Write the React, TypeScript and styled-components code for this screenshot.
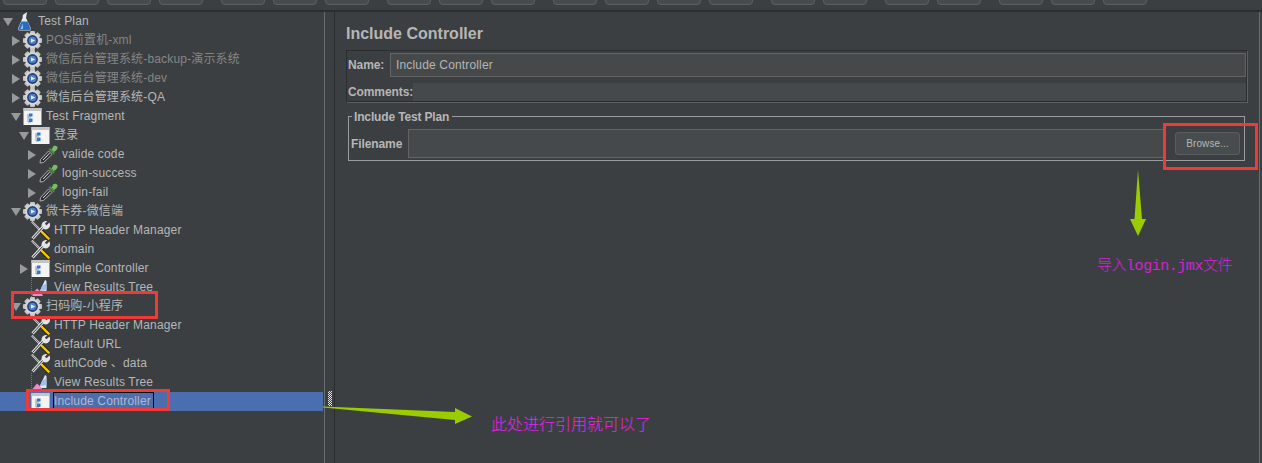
import React from "react";
import styled, {createGlobalStyle} from "styled-components";

const GlobalStyle = createGlobalStyle`
  html, body {
    margin: 0;
    background: #3c3f41;
  }
`;

const FONT = `"Liberation Sans", "Noto Sans CJK SC", sans-serif`;

const Page = styled.div`
  position: relative;
  width: 1262px;
  height: 463px;
  overflow: hidden;
  display: flex;
  flex-direction: column;
  background: #3c3f41;
  color: #b6b6b6;
  font: 12px ${FONT};
`;

const Toolbar = styled.div`
  flex: none;
  height: 10px;
  display: flex;
  align-items: flex-end;
  gap: 18px;
  padding: 0 0 5px 3px;
  box-sizing: border-box;
`;

const ToolGroup = styled.div`
  display: flex;
  gap: 8px;
`;

const ToolButton = styled.div`
  width: 44px;
  height: 30px;
  box-sizing: border-box;
  flex: none;
  background: #464b4c;
  border: 1px solid #5c6061;
  border-radius: 4px;
`;

const Main = styled.div`
  flex: 1;
  min-height: 0;
  display: flex;
  border-top: 2px solid #2b2d2e;
`;

const TreePanel = styled.div`
  width: 324px;
  flex: none;
  border-right: 1px solid #6a6d6f;
`;

const Row = styled.div<{$level: number; $selected?: boolean}>`
  height: 19px;
  display: flex;
  align-items: center;
  margin-right: 1px;
  padding-left: ${p => 3 + 8 * p.$level}px;
  background: ${p => (p.$selected ? "#4b6eaf" : "transparent")};
`;

const ArrowSlot = styled.span`
  width: 9px;
  flex: none;
  margin-right: 3px;
  display: flex;
  align-items: center;
  justify-content: center;
`;

const ArrowRight = styled.span`
  width: 0;
  height: 0;
  border-left: 8px solid #97999b;
  border-top: 5px solid transparent;
  border-bottom: 5px solid transparent;
`;

const ArrowDown = styled.span`
  width: 0;
  height: 0;
  border-top: 8px solid #97999b;
  border-left: 5px solid transparent;
  border-right: 5px solid transparent;
`;

const IconSlot = styled.span`
  width: 19px;
  height: 19px;
  flex: none;
  margin-right: 4px;
  display: block;

  svg {
    display: block;
  }
`;

const Label = styled.span<{$dim?: boolean; $selected?: boolean}>`
  white-space: nowrap;
  letter-spacing: 0.16px;
  line-height: 17px;
  color: ${p => (p.$selected ? "#b3b8cc" : p.$dim ? "#858585" : "#b6b6b6")};
  ${p => (p.$selected ? "outline: 1px solid #000; padding-right: 2px;" : "")}
`;

const Splitter = styled.div`
  width: 9px;
  flex: none;
  box-sizing: content-box;
  padding-top: 379px;
  border-right: 1px solid #2b2d2e;
`;

const Grip = styled.div`
  width: 4px;
  height: 15px;
  margin-left: 3px;
  background: repeating-conic-gradient(#e6e6e6 0 25%, #3c3f41 0 50%) 0 0 / 2px 2px;
`;

const Editor = styled.div`
  flex: 1;
  min-width: 0;
  box-sizing: border-box;
  padding: 12px 0 0 11px;
  margin-right: 2px;
  border-right: 1px solid #6a6d6f;
`;

const Title = styled.h1`
  margin: 0;
  font: bold 16px ${FONT};
  line-height: 20px;
  color: #b6b6b6;
`;

const NamePanel = styled.div`
  width: 901px;
  height: 52px;
  box-sizing: border-box;
  margin-top: 6px;
  padding: 2px 0 0 1px;
  border: 1px solid #2b2d2e;
  box-shadow: 1px 1px 0 #5e6163;
`;

const FieldRow = styled.div<{$height: number; $gap: number}>`
  display: flex;
  align-items: center;
  height: ${p => p.$height}px;
  margin-top: ${p => p.$gap}px;
`;

const FieldLabel = styled.label<{$width: number}>`
  width: ${p => p.$width}px;
  flex: none;
  font-weight: bold;
  letter-spacing: -0.1px;
  white-space: nowrap;
`;

const NameField = styled.div`
  flex: 1;
  height: 100%;
  box-sizing: border-box;
  padding-left: 5px;
  display: flex;
  align-items: center;
  letter-spacing: 0.16px;
  background: #45494a;
  border: 1px solid #646464;
`;

const CommentField = styled.div`
  flex: 1;
  height: 100%;
  background: #45494a;
`;

const TitledBox = styled.fieldset`
  width: 897px;
  height: 52px;
  box-sizing: border-box;
  margin: 7px 0 0 2px;
  padding: 5px 0 0 2px;
  border: 1px solid #9a9d9f;
  min-inline-size: 0;
`;

const BoxLegend = styled.legend`
  margin-left: 1px;
  padding: 1px 3px 0 2px;
  font-weight: bold;
  letter-spacing: -0.15px;
  line-height: 14px;
  color: #b6b6b6;
`;

const FileRow = styled.div`
  display: flex;
  align-items: center;
  height: 29px;
`;

const FileField = styled.div`
  width: 757px;
  height: 100%;
  box-sizing: border-box;
  background: #45494a;
  border: 1px solid #646464;
`;

const BrowseButton = styled.button`
  width: 65px;
  height: 23px;
  margin-left: 10px;
  padding: 0;
  font: 10px ${FONT};
  letter-spacing: 0.1px;
  color: #b6b6b6;
  background: #474c4f;
  border: 1px solid #5a5e60;
  border-radius: 3px;
`;

const RedBox = styled.div<{$x: number; $y: number; $w: number; $h: number}>`
  position: absolute;
  left: ${p => p.$x}px;
  top: ${p => p.$y}px;
  width: ${p => p.$w}px;
  height: ${p => p.$h}px;
  box-sizing: border-box;
  border: 3px solid #f03a3a;
`;

const Note = styled.div<{$x: number; $y: number; $size: number; $color: string; $spacing: number}>`
  position: absolute;
  left: ${p => p.$x}px;
  top: ${p => p.$y}px;
  font: 300 ${p => p.$size}px "Liberation Mono", "Noto Sans CJK SC", monospace;
  letter-spacing: ${p => p.$spacing}px;
  line-height: 20px;
  white-space: nowrap;
  color: ${p => p.$color};
`;

const ArrowLayer = styled.svg`
  position: absolute;
  left: 0;
  top: 0;
`;

function FlaskIcon() {
    return (
        <svg width="19" height="19" viewBox="0 0 19 19">
            <path d="M12 0 L11 6 L16 16.5 Q16.6 18.5 14.5 18.5 L4.5 18.5 Q2.4 18.5 3 16.5 L7.6 6 L7.8 3 Z" fill="#e4ebf2"/>
            <path d="M6.4 9.5 L12.6 9.5 L15.8 17 Q16 18 14.5 18 L4.5 18 Q3 18 3.2 17 Z" fill="#2a6cc0"/>
            <path d="M8 11.5 L5.4 17 L8 17 Z" fill="#8fc0f0"/>
        </svg>
    );
}

function GearIcon() {
    return (
        <svg width="19" height="19" viewBox="0 0 19 19">
            {[0, 45, 90, 135].map(a => (
                <rect key={a} x="7" y="0" width="5" height="19" rx="1" fill="#c6c6c6" transform={`rotate(${a} 9.5 9.5)`}/>
            ))}
            <circle cx="9.5" cy="9.5" r="7.4" fill="#d6d6d6"/>
            <circle cx="9.5" cy="9.5" r="5.4" fill="#223f78"/>
            <circle cx="9.5" cy="9.5" r="3.8" fill="#4f7fc8"/>
            <path d="M8 7.4 L12.2 9.5 L8 11.6 Z" fill="#e9eef6"/>
        </svg>
    );
}

function WindowIcon() {
    return (
        <svg width="19" height="19" viewBox="0 0 19 19">
            <rect x="0.5" y="1" width="18" height="17" fill="#f4f4f4"/>
            <rect x="0.5" y="1" width="18" height="3" fill="#c4c4c4"/>
            <path d="M5 7 L5 15 L8 15 M5 10 L8 10" fill="none" stroke="#8d9cb0" strokeWidth="1"/>
            <rect x="6" y="6.5" width="3.5" height="3" fill="#2f77d0"/>
            <rect x="6" y="11.5" width="3.5" height="3.5" fill="#2f77d0"/>
        </svg>
    );
}

function DropperIcon() {
    return (
        <svg width="19" height="19" viewBox="0 0 19 19">
            <path d="M1 18 L1.5 14.5 L9.5 6 L13 9.5 L4.5 17.5 Z" fill="#2f3234" stroke="#b8b8b8" strokeWidth="0.9"/>
            <path d="M4 15 L10.5 8.2" stroke="#e4e4e4" strokeWidth="1"/>
            <path d="M9.5 4.5 L14.5 9.5 L16 8 L11 3 Z" fill="#4a8a42"/>
            <path d="M12.5 4.5 L14.5 1 Q17 0 18.5 2 Q19 4.5 15 7 Z" fill="#7dbb62"/>
        </svg>
    );
}

function ToolsIcon() {
    return (
        <svg width="19" height="19" viewBox="0 0 19 19">
            <path d="M0.8 0.5 L10 10" stroke="#dcdcdc" strokeWidth="2"/>
            <path d="M0.8 0.5 L9 9" stroke="#25282a" strokeWidth="0.6"/>
            <path d="M10.8 10.8 L17.6 17.6" stroke="#141414" strokeWidth="4" strokeLinecap="round"/>
            <path d="M10.8 10.8 L17.6 17.6" stroke="#f4c400" strokeWidth="2.6" strokeLinecap="round"/>
            <path d="M1.5 17.5 L12.5 5.5" stroke="#e0e0e0" strokeWidth="3"/>
            <path d="M1.5 17.5 L12.5 5.5" stroke="#2c2f31" strokeWidth="1"/>
            <path d="M18.4 1.6 L15.6 4.2 L13.8 2.8 L16.2 0.2 A4.4 4.4 0 0 0 10.8 5.8 L13 8 A4.4 4.4 0 0 0 18.4 1.6 Z" fill="#e4e4e4"/>
        </svg>
    );
}

function ResultsIcon() {
    return (
        <svg width="19" height="19" viewBox="0 0 19 19">
            <path d="M0.5 0 L0.5 19" stroke="#74777a" strokeWidth="1" strokeDasharray="1 1"/>
            <path d="M14 2 L15.5 3 L15.5 15 L8 15 Z" fill="#dfe9f5"/>
            <path d="M11 8 L15.5 5 L15.5 12 L9 13 Z" fill="#9fc0ea"/>
            <path d="M1.5 16 L6 10.5 L10 14 L12 18 L1.5 18 Z" fill="#f08ad0"/>
        </svg>
    );
}

const ICONS = {
    flask: FlaskIcon,
    gear: GearIcon,
    window: WindowIcon,
    dropper: DropperIcon,
    tools: ToolsIcon,
    results: ResultsIcon,
};

interface TreeNode {
    level: number;
    icon: keyof typeof ICONS;
    label: string;
    arrow?: "down" | "right";
    dim?: boolean;
    selected?: boolean;
}

const TREE: TreeNode[] = [
    {level: 0, icon: "flask", label: "Test Plan", arrow: "down"},
    {level: 1, icon: "gear", label: "POS前置机-xml", arrow: "right", dim: true},
    {level: 1, icon: "gear", label: "微信后台管理系统-backup-演示系统", arrow: "right", dim: true},
    {level: 1, icon: "gear", label: "微信后台管理系统-dev", arrow: "right", dim: true},
    {level: 1, icon: "gear", label: "微信后台管理系统-QA", arrow: "right"},
    {level: 1, icon: "window", label: "Test Fragment", arrow: "down"},
    {level: 2, icon: "window", label: "登录", arrow: "down"},
    {level: 3, icon: "dropper", label: "valide code", arrow: "right"},
    {level: 3, icon: "dropper", label: "login-success", arrow: "right"},
    {level: 3, icon: "dropper", label: "login-fail", arrow: "right"},
    {level: 1, icon: "gear", label: "微卡券-微信端", arrow: "down"},
    {level: 2, icon: "tools", label: "HTTP Header Manager"},
    {level: 2, icon: "tools", label: "domain"},
    {level: 2, icon: "window", label: "Simple Controller", arrow: "right"},
    {level: 2, icon: "results", label: "View Results Tree"},
    {level: 1, icon: "gear", label: "扫码购-小程序", arrow: "down"},
    {level: 2, icon: "tools", label: "HTTP Header Manager"},
    {level: 2, icon: "tools", label: "Default URL"},
    {level: 2, icon: "tools", label: "authCode 、data"},
    {level: 2, icon: "results", label: "View Results Tree"},
    {level: 2, icon: "window", label: "Include Controller", selected: true},
];

const TOOL_GROUPS = [4, 3, 3, 4, 2, 2, 3];

export default function App() {
    return (
        <Page>
            <GlobalStyle/>
            <Toolbar>
                {TOOL_GROUPS.map((count, i) => (
                    <ToolGroup key={i}>
                        {Array.from({length: count}, (_, j) => <ToolButton key={j}/>)}
                    </ToolGroup>
                ))}
            </Toolbar>
            <Main>
                <TreePanel>
                    {TREE.map((node, i) => {
                        const Icon = ICONS[node.icon];
                        return (
                            <Row key={i} $level={node.level} $selected={node.selected}>
                                <ArrowSlot>
                                    {node.arrow === "down" && <ArrowDown/>}
                                    {node.arrow === "right" && <ArrowRight/>}
                                </ArrowSlot>
                                <IconSlot><Icon/></IconSlot>
                                <Label $dim={node.dim} $selected={node.selected}>{node.label}</Label>
                            </Row>
                        );
                    })}
                </TreePanel>
                <Splitter><Grip/></Splitter>
                <Editor>
                    <Title>Include Controller</Title>
                    <NamePanel>
                        <FieldRow $height={24} $gap={0}>
                            <FieldLabel $width={42}>Name:</FieldLabel>
                            <NameField>Include Controller</NameField>
                        </FieldRow>
                        <FieldRow $height={18} $gap={6}>
                            <FieldLabel $width={65}>Comments:</FieldLabel>
                            <CommentField/>
                        </FieldRow>
                    </NamePanel>
                    <TitledBox>
                        <BoxLegend>Include Test Plan</BoxLegend>
                        <FileRow>
                            <FieldLabel $width={57}>Filename</FieldLabel>
                            <FileField/>
                            <BrowseButton>Browse...</BrowseButton>
                        </FileRow>
                    </TitledBox>
                </Editor>
            </Main>

            <RedBox $x={11} $y={291} $w={147} $h={28}/>
            <RedBox $x={26} $y={389} $w={144} $h={22}/>
            <RedBox $x={1163} $y={123} $w={95} $h={47}/>

            <ArrowLayer width="1262" height="463" viewBox="0 0 1262 463">
                <polygon points="1138,170 1142,219 1146,219 1138,236 1130,219 1134.5,219" fill="#9acd00"/>
                <polygon points="323,406.5 455,412 455,408 472,416.5 455,424 455,420 323,407.5" fill="#9acd00"/>
            </ArrowLayer>

            <Note $x={1097} $y={257} $size={15} $color="#d423d4" $spacing={-0.46}>导入login.jmx文件</Note>
            <Note $x={491} $y={416} $size={16} $color="#f020f0" $spacing={0}>此处进行引用就可以了</Note>
        </Page>
    );
}
